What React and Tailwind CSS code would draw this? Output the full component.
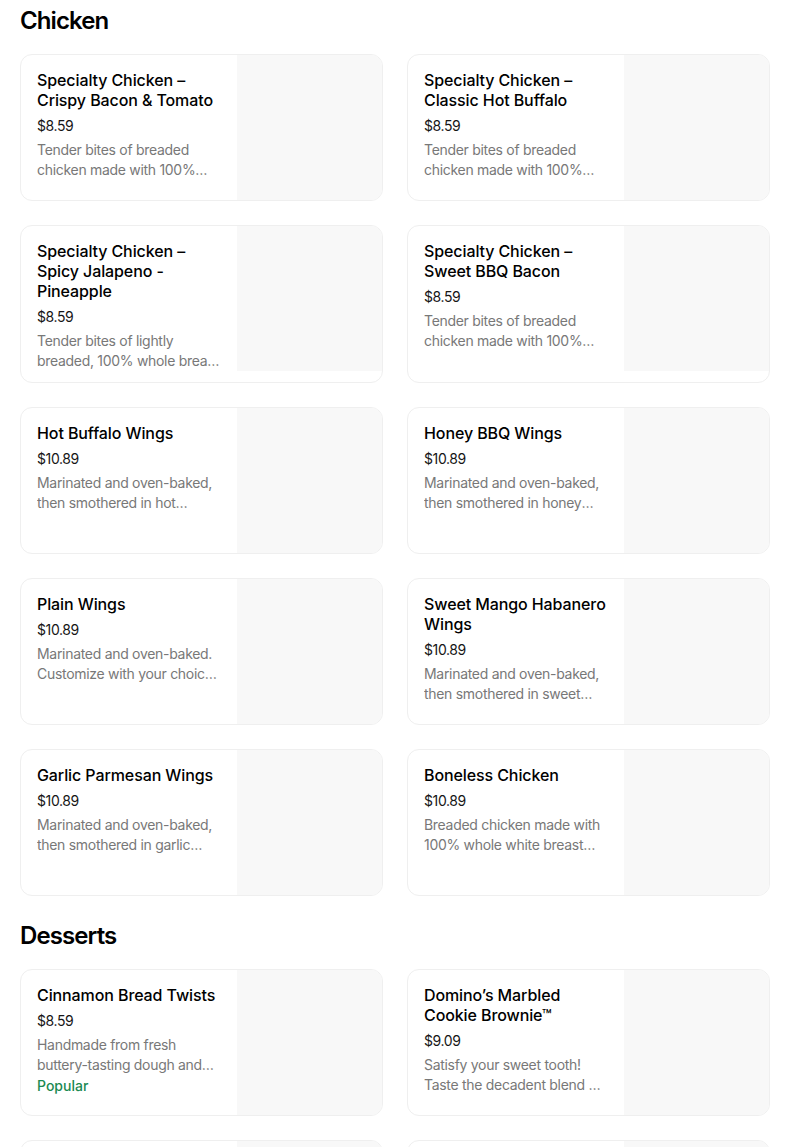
const sections = [
  {
    title: 'Chicken',
    items: [
      { name: 'Specialty Chicken – Crispy Bacon & Tomato', price: '$8.59', desc: 'Tender bites of breaded chicken made with 100% whole breast white meat, topped with crispy bacon and diced tomatoes.' },
      { name: 'Specialty Chicken – Classic Hot Buffalo', price: '$8.59', desc: 'Tender bites of breaded chicken made with 100% whole breast white meat, topped with classic hot buffalo sauce.' },
      { name: 'Specialty Chicken – Spicy Jalapeno - Pineapple', price: '$8.59', desc: 'Tender bites of lightly breaded, 100% whole breast white meat chicken, topped with jalapenos and pineapple.' },
      { name: 'Specialty Chicken – Sweet BBQ Bacon', price: '$8.59', desc: 'Tender bites of breaded chicken made with 100% whole breast white meat, topped with sweet BBQ sauce and bacon.' },
      { name: 'Hot Buffalo Wings', price: '$10.89', desc: 'Marinated and oven-baked, then smothered in hot buffalo sauce.' },
      { name: 'Honey BBQ Wings', price: '$10.89', desc: 'Marinated and oven-baked, then smothered in honey BBQ sauce.' },
      { name: 'Plain Wings', price: '$10.89', desc: 'Marinated and oven-baked. Customize with your choice of dipping sauce.' },
      { name: 'Sweet Mango Habanero Wings', price: '$10.89', desc: 'Marinated and oven-baked, then smothered in sweet mango habanero sauce.' },
      { name: 'Garlic Parmesan Wings', price: '$10.89', desc: 'Marinated and oven-baked, then smothered in garlic parmesan sauce.' },
      { name: 'Boneless Chicken', price: '$10.89', desc: 'Breaded chicken made with 100% whole white breast meat, served with your choice of sauce.' }
    ]
  },
  {
    title: 'Desserts',
    items: [
      { name: 'Cinnamon Bread Twists', price: '$8.59', desc: 'Handmade from fresh buttery-tasting dough and baked to a golden brown, topped with cinnamon and sugar.', popular: true },
      { name: 'Domino’s Marbled Cookie Brownie™', price: '$9.09', desc: 'Satisfy your sweet tooth! Taste the decadent blend of gooey milk chocolate chunk cookie and brownie.' },
      { name: 'Chocolate Lava Crunch Cakes', price: '$8.59', desc: 'Decadent chocolate cake outside with a warm, molten chocolate fudge inside.' },
      { name: 'Chocolate Chip Cookies', price: '$6.99', desc: 'Eight freshly baked chocolate chip cookies.' }
    ]
  }
];

const ItemCard = ({ item }) => (
  <div className="flex overflow-hidden rounded-xl border border-[#efefef] bg-white">
    <div className="flex min-w-0 flex-1 flex-col px-4 pb-[11px] pt-[15px]">
      <p className="text-[16px] font-medium leading-5 tracking-[-0.1px] text-black">{item.name}</p>
      <p className="mt-[6px] text-[14px] leading-5 tracking-[-0.4px] text-[#161616]">{item.price}</p>
      <p className="mt-1 line-clamp-2 text-[14px] leading-5 tracking-[-0.3px] text-[#787878]">{item.desc}</p>
      {item.popular && (
        <p className="mt-[1px] text-[14px] font-medium leading-5 text-[#1b8a52]">Popular</p>
      )}
    </div>
    <div className="h-[145px] w-[145px] shrink-0 self-start bg-[#f8f8f8]" />
  </div>
);

export default function App() {
  return (
    <div
      className="min-h-screen bg-white pb-10 text-black"
      style={{ fontFamily: 'Inter, "Liberation Sans", sans-serif' }}
    >
      <div className="ml-5 w-[750px]">
        {sections.map((section, i) => (
          <section key={section.title} className={i === 0 ? 'pt-[5px]' : 'pt-6'}>
            <h2 className="text-[24px] font-semibold leading-8 tracking-[-0.9px]">{section.title}</h2>
            <div className="mt-[17px] grid grid-cols-2 gap-x-6 gap-y-6">
              {section.items.map((item) => (
                <ItemCard key={item.name} item={item} />
              ))}
            </div>
          </section>
        ))}
      </div>
    </div>
  );
}
